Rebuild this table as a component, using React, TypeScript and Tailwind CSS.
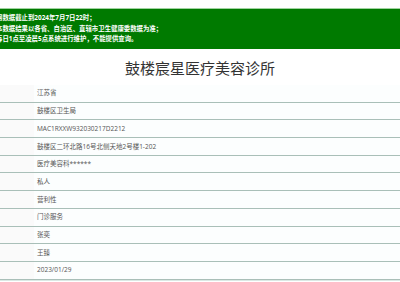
const rows = [
  "江苏省",
  "鼓楼区卫生局",
  "MAC1RXXW932030217D2212",
  "鼓楼区二环北路16号北侧天地2号楼1-202",
  "医疗美容科******",
  "私人",
  "营利性",
  "门诊服务",
  "张奕",
  "王臻",
  "2023/01/29",
];

export default function App() {
  return (
    <div
      className="w-[400px] h-[282px] overflow-hidden bg-white"
      style={{ fontFamily: '"Open Sans", "Noto Sans CJK SC", sans-serif' }}
    >
      <div className="h-[8px] bg-white" />
      {/* notice banner */}
      <div className="h-[41px] bg-[#007a00] border-t border-[#9fd39f] overflow-hidden">
        <div className="-ml-[4px] pt-[4px] flex flex-col text-white font-bold text-[6.4px] leading-[10.5px]">
          <p>网数据截止到2024年7月7日22时；</p>
          <p>本数据结果以各省、自治区、直辖市卫生健康委数据为准；</p>
          <p>每日1点至凌晨5点系统进行维护，不能提供查询。</p>
        </div>
      </div>

      <h1 className="mt-[9px] text-center text-[15px] leading-[20px] text-[#333]">
        鼓楼宸星医疗美容诊所
      </h1>

      <div className="mt-[7px]">
        {rows.map((r, i) => (
          <div
            key={i}
            className="flex h-[17.7px] border-b border-[#a9bfb8] shadow-[0_1px_0_#dbe8e4]"
          >
            <div className="w-[34px] bg-[#fafafa]" />
            <div className="flex-1 pl-[3px] flex items-center text-[6.5px] text-[#555] bg-[#fcfefe]">
              {r}
            </div>
          </div>
        ))}
      </div>
    </div>
  );
}
